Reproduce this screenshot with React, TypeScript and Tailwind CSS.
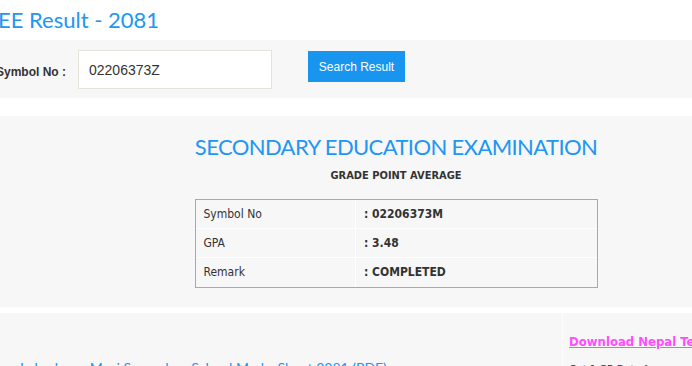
export default function App() {
  const rows = [
    { label: "Symbol No", value: ": 02206373M" },
    { label: "GPA", value: ": 3.48" },
    { label: "Remark", value: ": COMPLETED" },
  ];

  return (
    <div className="w-[692px] h-[366px] overflow-hidden bg-white font-['Lato',sans-serif]">
      {/* page title, cropped at the left edge */}
      <h1 className="h-[40px] pt-[5px] -ml-[14px] text-[22px] leading-[30px] text-[#2196f3] whitespace-nowrap">
        SEE Result - 2081
      </h1>

      {/* search bar */}
      <div className="h-[58px] bg-[#f7f7f7] flex items-start">
        <label className="mt-[23px] -ml-[4px] w-[82px] text-[12px] font-bold text-[#333] font-['Liberation_Sans',sans-serif] whitespace-nowrap">
          Symbol No :
        </label>
        <input
          readOnly
          value="02206373Z"
          className="mt-[10px] w-[194px] h-[39px] px-[10px] bg-white border border-[#e3e3da] text-[14px] text-[#333] font-['Liberation_Sans',sans-serif] outline-none"
        />
        <button className="mt-[11px] ml-[36px] w-[97px] h-[31px] bg-[#1795ef] text-white text-[12px] font-['Liberation_Sans',sans-serif]">
          Search Result
        </button>
      </div>

      {/* result card */}
      <div className="mt-[18px] h-[191px] bg-[#f7f7f7] pl-[100px] flex flex-col items-center">
        <h2 className="mt-[18px] text-[22px] leading-[26px] text-[#2196f3] whitespace-nowrap tracking-[-0.6px]">
          SECONDARY EDUCATION EXAMINATION
        </h2>
        <h3 className="mt-[8px] text-[11px] font-bold text-[#333] font-['DejaVu_Sans_Condensed','DejaVu_Sans',sans-serif]">
          GRADE POINT AVERAGE
        </h3>
        <div className="mt-[14px] w-[403px] border border-[#a9a9a9]">
          <table className="w-full border-collapse border-hidden text-[12px] text-[#333] font-['DejaVu_Sans_Condensed','DejaVu_Sans',sans-serif]">
            <tbody>
              {rows.map((r) => (
                <tr key={r.label} className="h-[29px]">
                  <td className="w-[160px] pl-[8px] border border-white">{r.label}</td>
                  <td className="pl-[8px] font-bold border border-white">{r.value}</td>
                </tr>
              ))}
            </tbody>
          </table>
        </div>
      </div>

      {/* lower section */}
      <div className="mt-[6px] h-[60px] bg-[#f7f7f7] flex">
        <div className="w-[562px] shrink-0 flex flex-col justify-end overflow-hidden">
          <a className="pl-[20px] translate-y-[5px] text-[14px] text-[#2196f3] whitespace-nowrap">
            Lokeshwor Mavi Secondary School Marks Sheet 2081 (PDF)
          </a>
        </div>
        <div className="flex-1 min-w-0 border-l border-[#fdfdfd] pl-[6px] pt-[19px]">
          <a className="block text-[13px] font-bold text-[#ff4dff] underline whitespace-nowrap font-['DejaVu_Sans_Condensed','DejaVu_Sans',sans-serif]">
            Download Nepal Telecom App
          </a>
          <p className="mt-[10px] text-[11px] text-[#333] whitespace-nowrap font-['DejaVu_Sans_Condensed',sans-serif]">
            Get 1 GB Data free
          </p>
        </div>
      </div>
    </div>
  );
}
